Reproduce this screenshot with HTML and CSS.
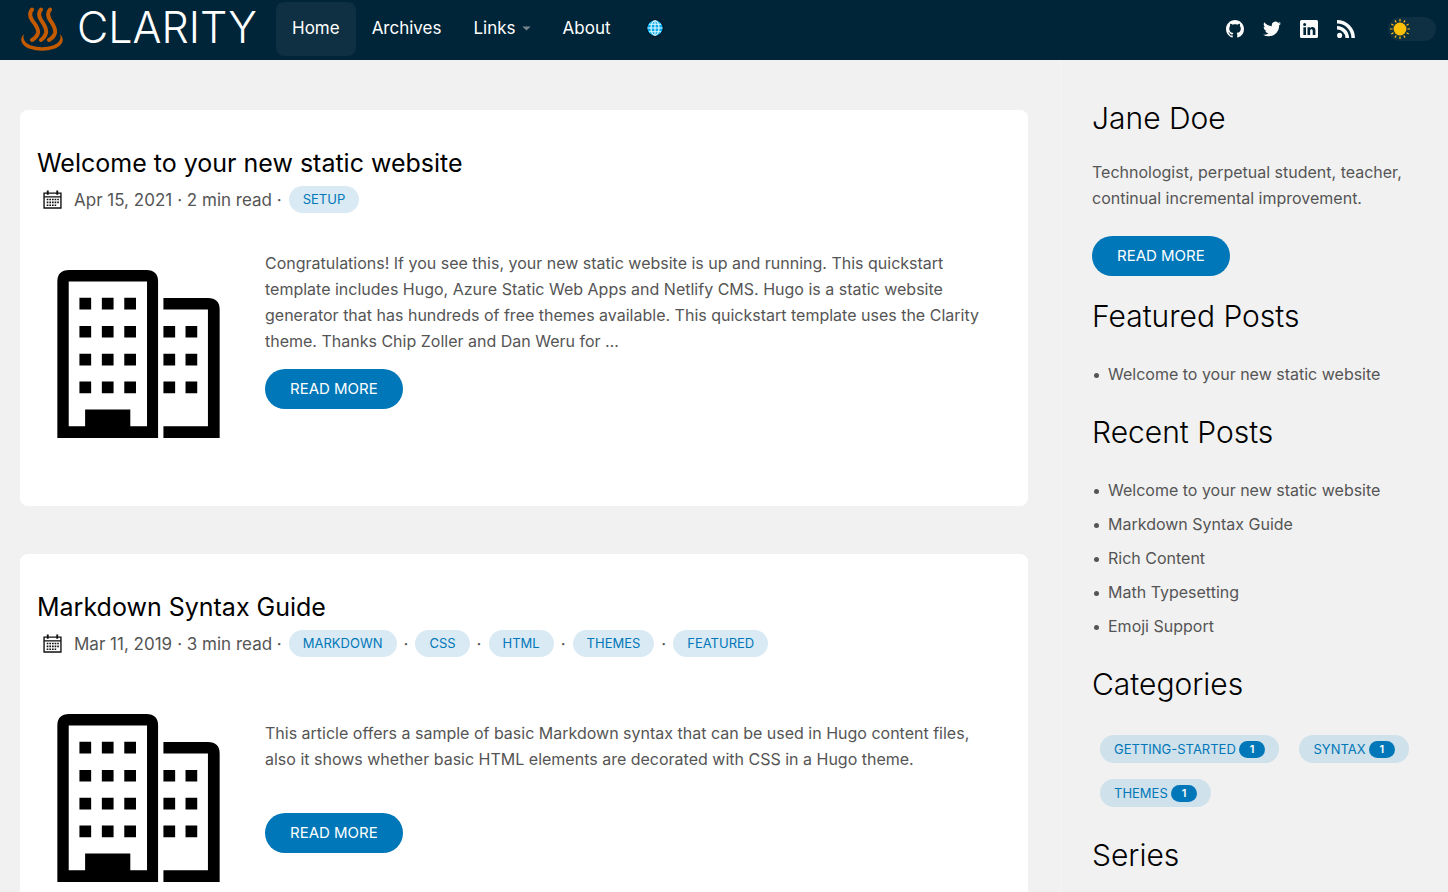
FILE: index.html
```html
<!DOCTYPE html>
<html lang="en">
<head>
<meta charset="utf-8">
<meta name="viewport" content="width=device-width, initial-scale=1">
<title>Clarity</title>
<link rel="stylesheet" href="styles.css">
</head>
<body>
<svg class="sprite" aria-hidden="true">
  <symbol id="calendar" viewBox="0 0 18 18">
    <path d="M1 3h16v14H1z" fill="none" stroke="#111" stroke-width="1.3"/>
    <path d="M1 6.5h16" stroke="#111" stroke-width="1.2"/>
    <path d="M4.5 .5v4M13.5 .5v4" stroke="#111" stroke-width="1.8"/>
    <path d="M3.5 9h11.5M3.5 11.7h11.5M3.5 14.4h9" stroke="#111" stroke-width="1.5" stroke-dasharray="1.6 .9"/>
  </symbol>
  <symbol id="building" viewBox="54 61 485 502">
    <path fill-rule="evenodd" d="M54 563V96q0-35 35-35h231q35 0 35 35v467zM88 95v433h49v-50h135v50h50V95z"/>
    <path d="M371 145h133q35 0 35 35v383H371v-35h133V179H371z"/>
    <path d="M120 144h35v35h-35zM187 144h35v35h-35zM254 144h35v35h-35zM120 228h35v35h-35zM187 228h35v35h-35zM254 228h35v35h-35zM120 311h35v35h-35zM187 311h35v35h-35zM254 311h35v35h-35zM120 394h35v35h-35zM187 394h35v35h-35zM254 394h35v35h-35zM371 228h35v35h-35zM437 228h35v35h-35zM371 311h35v35h-35zM437 311h35v35h-35zM371 394h35v35h-35zM437 394h35v35h-35z"/>
  </symbol>
</svg>

<header class="site-header">
  <a class="brand" href="#" aria-label="Clarity">
    <svg class="brand-mark" viewBox="0 0 42 44" aria-hidden="true">
      <g fill="none" stroke="#c35a00" stroke-width="4" stroke-linecap="round">
        <path d="M11 2.500C8 6 8.500 9 11 13s7 8 6 13q-1 4-6 7"/>
        <path d="M20 2.500c-3 3.500-2.500 6.500 0 10.500s6 8 5 13q-1 4-5 7"/>
        <path d="M29 2.500c-3 3.500-2.500 6.500 0 10.500s6 8 5 13q-1 4-6 7"/>
      </g>
      <path fill="#c35a00" d="M3 27C-2 32 0 38 8 41.500q13 4.500 26 0C42 38 44 32 39 27c2 6-2 9.500-7 11.500q-11 3.500-22 0C5 36.500 1 33 3 27z"/>
    </svg>
    <span class="brand-name">CLARITY</span>
  </a>
  <nav class="nav">
    <a class="nav-link is-active" href="#">Home</a>
    <a class="nav-link" href="#">Archives</a>
    <a class="nav-link" href="#">Links <svg class="caret" viewBox="0 0 10 6" aria-hidden="true"><path d="M0 .5h10l-5 5z"/></svg></a>
    <a class="nav-link" href="#">About</a>
    <a class="nav-link" href="#" aria-label="Language">
      <svg class="globe" viewBox="0 0 18 18" aria-hidden="true">
        <circle cx="9" cy="9" r="8.300" fill="#00a9e8" stroke="#00121c" stroke-width="1.200"/>
        <g fill="none" stroke="#e8f8ff" stroke-width="1.100"><path d="M9 1.500v15M1.500 9h15M3 5.300h12M3 12.700h12"/><ellipse cx="9" cy="9" rx="4" ry="7.300"/></g>
      </svg>
    </a>
  </nav>
  <div class="tools">
    <a class="social" href="#" aria-label="GitHub"><svg viewBox="0 0 16 16"><path d="M8 0C3.580 0 0 3.580 0 8c0 3.540 2.290 6.530 5.470 7.590.4.070.550-.170.550-.380 0-.190-.010-.820-.010-1.490-2.010.370-2.530-.490-2.690-.940-.090-.230-.480-.940-.820-1.130-.280-.150-.680-.520-.010-.530.630-.010 1.080.580 1.230.820.720 1.210 1.870.870 2.330.660.070-.520.280-.870.510-1.070-1.780-.2-3.640-.890-3.640-3.950 0-.870.310-1.590.820-2.150-.080-.2-.360-1.020.080-2.120 0 0 .670-.210 2.200.820.640-.180 1.320-.270 2-.270s1.360.090 2 .270c1.530-1.040 2.200-.820 2.200-.820.440 1.100.160 1.920.080 2.120.510.560.820 1.270.820 2.150 0 3.070-1.870 3.750-3.650 3.950.290.250.540.730.540 1.480 0 1.070-.010 1.930-.010 2.200 0 .210.150.460.550.380A8.010 8.010 0 0 0 16 8c0-4.420-3.580-8-8-8z"/></svg></a>
    <a class="social" href="#" aria-label="Twitter"><svg viewBox="0 0 24 24"><path d="M23.950 4.570a10 10 0 0 1-2.820.770 4.960 4.960 0 0 0 2.160-2.720c-.950.550-2 .950-3.130 1.180a4.920 4.920 0 0 0-8.380 4.480C7.690 8.090 4.070 6.130 1.640 3.160a4.820 4.820 0 0 0-.670 2.480c0 1.710.870 3.210 2.190 4.100a4.900 4.900 0 0 1-2.230-.620v.060a4.920 4.920 0 0 0 3.950 4.830 5 5 0 0 1-2.210.080 4.940 4.940 0 0 0 4.600 3.420A9.870 9.870 0 0 1 0 19.540a13.990 13.990 0 0 0 7.550 2.210c9.050 0 14-7.500 14-13.980 0-.210 0-.420-.020-.630a9.940 9.940 0 0 0 2.420-2.570z"/></svg></a>
    <a class="social" href="#" aria-label="LinkedIn"><svg viewBox="0 0 24 24"><path fill-rule="evenodd" d="M2 0h20q2 0 2 2v20q0 2-2 2H2q-2 0-2-2V2q0-2 2-2zM4.500 9.500V20H8V9.500zM6.200 4a2 2 0 1 0 0 4.100 2 2 0 0 0 0-4.100zM10 9.500V20h3.500v-5.500c0-3 3.500-3 3.500 0V20h3.500v-6.500c0-5-5.300-5.200-7-2.500V9.500z"/></svg></a>
    <a class="social" href="#" aria-label="RSS"><svg viewBox="0 0 24 24"><circle cx="3.500" cy="20.500" r="3.400"/><path d="M0 8a16 16 0 0 1 16 16h-4.700A11.300 11.300 0 0 0 0 12.700zM0 0a24 24 0 0 1 24 24h-4.800A19.200 19.200 0 0 0 0 4.800z"/></svg></a>
    <label class="mode">
      <input class="mode-input" type="checkbox" aria-label="Dark mode">
      <svg class="sun" viewBox="0 0 20 20" aria-hidden="true"><circle cx="10" cy="10" r="6.400" fill="#ffc107"/><path stroke="#ffc107" stroke-width="1.200" d="M10 0v2.500M10 17.500V20M0 10h2.500M17.500 10H20M5 1.340l1.200 2.100M13.800 16.560l1.200 2.100M1.340 5l2.100 1.200M16.560 13.800l2.100 1.200M1.340 15l2.100-1.200M16.560 6.200l2.100-1.200M5 18.660l1.200-2.100M13.800 3.440l1.200-2.100"/></svg>
    </label>
  </div>
</header>

<div class="page">
  <main class="posts">
    <article class="card">
      <h2 class="card-title"><a href="#">Welcome to your new static website</a></h2>
      <div class="meta">
        <svg class="calendar" aria-hidden="true"><use href="#calendar"/></svg>
        <span class="date">Apr 15, 2021</span><span>· 2 min read ·</span>
        <a class="tag" href="#">SETUP</a>
      </div>
      <div class="card-body">
        <svg class="thumb" role="img" aria-label="Buildings"><use href="#building"/></svg>
        <div class="excerpt">
          <div class="excerpt-text"><p>Congratulations! If you see this, your new static website is up and running. This quickstart template includes Hugo, Azure Static Web Apps and Netlify CMS. Hugo is a static website generator that has hundreds of free themes available. This quickstart template uses the Clarity theme. Thanks Chip Zoller and Dan Weru for …</p></div>
          <a class="button" href="#">READ MORE</a>
        </div>
      </div>
    </article>
    <article class="card">
      <h2 class="card-title"><a href="#">Markdown Syntax Guide</a></h2>
      <div class="meta">
        <svg class="calendar" aria-hidden="true"><use href="#calendar"/></svg>
        <span class="date">Mar 11, 2019</span><span>· 3 min read ·</span>
        <a class="tag" href="#">MARKDOWN</a><span class="dot">·</span>
        <a class="tag" href="#">CSS</a><span class="dot">·</span>
        <a class="tag" href="#">HTML</a><span class="dot">·</span>
        <a class="tag" href="#">THEMES</a><span class="dot">·</span>
        <a class="tag" href="#">FEATURED</a>
      </div>
      <div class="card-body">
        <svg class="thumb" role="img" aria-label="Buildings"><use href="#building"/></svg>
        <div class="excerpt">
          <div class="excerpt-text"><p>This article offers a sample of basic Markdown syntax that can be used in Hugo content files, also it shows whether basic HTML elements are decorated with CSS in a Hugo theme.</p></div>
          <a class="button" href="#">READ MORE</a>
        </div>
      </div>
    </article>
  </main>

  <aside class="sidebar">
    <section class="block">
      <h2 class="side-title">Jane Doe</h2>
      <p class="bio">Technologist, perpetual student, teacher, continual incremental improvement.</p>
      <a class="button" href="#">READ MORE</a>
    </section>
    <section class="block">
      <h2 class="side-title">Featured Posts</h2>
      <ul class="links"><li><a href="#">Welcome to your new static website</a></li></ul>
    </section>
    <section class="block">
      <h2 class="side-title">Recent Posts</h2>
      <ul class="links">
        <li><a href="#">Welcome to your new static website</a></li>
        <li><a href="#">Markdown Syntax Guide</a></li>
        <li><a href="#">Rich Content</a></li>
        <li><a href="#">Math Typesetting</a></li>
        <li><a href="#">Emoji Support</a></li>
      </ul>
    </section>
    <section class="block">
      <h2 class="side-title">Categories</h2>
      <div class="categories">
        <a class="tag tag-count" href="#">GETTING-STARTED <span class="count">1</span></a>
        <a class="tag tag-count" href="#">SYNTAX <span class="count">1</span></a>
        <a class="tag tag-count" href="#">THEMES <span class="count">1</span></a>
      </div>
    </section>
    <section class="block">
      <h2 class="side-title">Series</h2>
    </section>
  </aside>
</div>
</body>
</html>
```
FILE: styles.css
```css
* { box-sizing: border-box; }
html { overflow: hidden; height: 100%; }
body {
  margin: 0;
  height: 100%;
  overflow: hidden;
  background: #f1f1f1;
  color: #555;
  font: 400 16px/26px Inter, "Liberation Sans", sans-serif;
}
a { color: inherit; text-decoration: none; }
h2, p, ul { margin: 0; padding: 0; }
.sprite { display: none; }

.site-header {
  display: flex;
  align-items: center;
  height: 60px;
  padding: 0 12px 2px 21px;
  background: #002538;
  color: #fff;
}
.brand { display: flex; align-items: center; gap: 14px; width: 255px; }
.brand-mark { width: 42px; height: 44px; }
.brand-name { padding-bottom: 4px; font-size: 43px; font-weight: 300; line-height: 50px; }
.nav { display: flex; }
.nav-link {
  display: flex;
  align-items: center;
  gap: 6px;
  height: 54px;
  padding: 0 16px 2px;
  border-radius: 8px;
  font-size: 17px;
}
.is-active { background: #0f3042; }
.caret { width: 9px; height: 5px; fill: #76858e; }
.globe { width: 18px; height: 18px; margin-left: 3px; }
.tools { display: flex; align-items: center; gap: 19px; margin-left: auto; }
.social { display: flex; }
.social svg { width: 18px; height: 18px; fill: #fafafa; }
.mode {
  display: flex;
  align-items: center;
  width: 48px;
  height: 24px;
  margin-left: 14px;
  padding-left: 2px;
  border-radius: 12px;
  background: #0f3042;
}
.mode-input { appearance: none; width: 0; height: 0; margin: 0; }
.sun { width: 20px; height: 20px; }

.page { display: grid; grid-template-columns: minmax(0, 1fr) 388px; gap: 32px; padding-left: 20px; }
.posts { display: grid; gap: 48px; padding: 50px 0; }
.card { padding: 35px 17px 48px; border-radius: 8px; background: #fff; }
.card-title { color: #000; font-size: 25px; font-weight: 400; line-height: 36px; }
.meta { display: flex; align-items: center; height: 37px; padding-left: 6px; font-size: 17px; }
.calendar { width: 19px; height: 19px; margin-right: 12px; }
.date { margin-right: 5px; }
.tag {
  margin-left: 7px;
  padding: 0 14px;
  border-radius: 14px;
  background: #d9eaf4;
  color: #0077b8;
  font-size: 13px;
  line-height: 27px;
}
.dot { margin-left: 7px; }
.card-body { display: grid; grid-template-columns: 204px minmax(0, 1fr); gap: 24px; margin-top: 32px; min-height: 208px; }
.thumb { width: 163px; height: 168px; margin: 20px; fill: #000; }
.excerpt { padding-right: 8px; }
.excerpt-text { display: flex; align-items: center; min-height: 104px; margin-bottom: 15px; }
.button {
  display: inline-block;
  padding: 0 25px;
  border-radius: 20px;
  background: #0077b8;
  color: #fff;
  font-size: 15px;
  line-height: 40px;
}

.sidebar {
  display: flex;
  flex-direction: column;
  gap: 27px;
  padding: 40px 30px 0 31px;
  border-left: 1px solid #f5f5f5;
}
.side-title { color: #000; font-size: 30px; font-weight: 300; line-height: 36px; }
.bio { margin: 23px 0 25px; }
.block:first-child { margin-bottom: -5px; }
.links { display: grid; gap: 8px; margin-top: 27px; padding-left: 16px; list-style: none; }
.links li::before { content: ""; float: left; width: 5px; height: 5px; margin: 12px 0 0 -14px; border-radius: 50%; background: #555; }
.categories { display: flex; flex-wrap: wrap; gap: 16px 12px; margin: 33px 0 3px; }
.tag-count { display: flex; align-items: center; gap: 3px; margin-left: 8px; background: #cfe1eb; line-height: 28px; }
.count { padding: 0 11px; border-radius: 9px; background: #0077b8; color: #fff; font-size: 11px; font-weight: 600; line-height: 17px; }
```
